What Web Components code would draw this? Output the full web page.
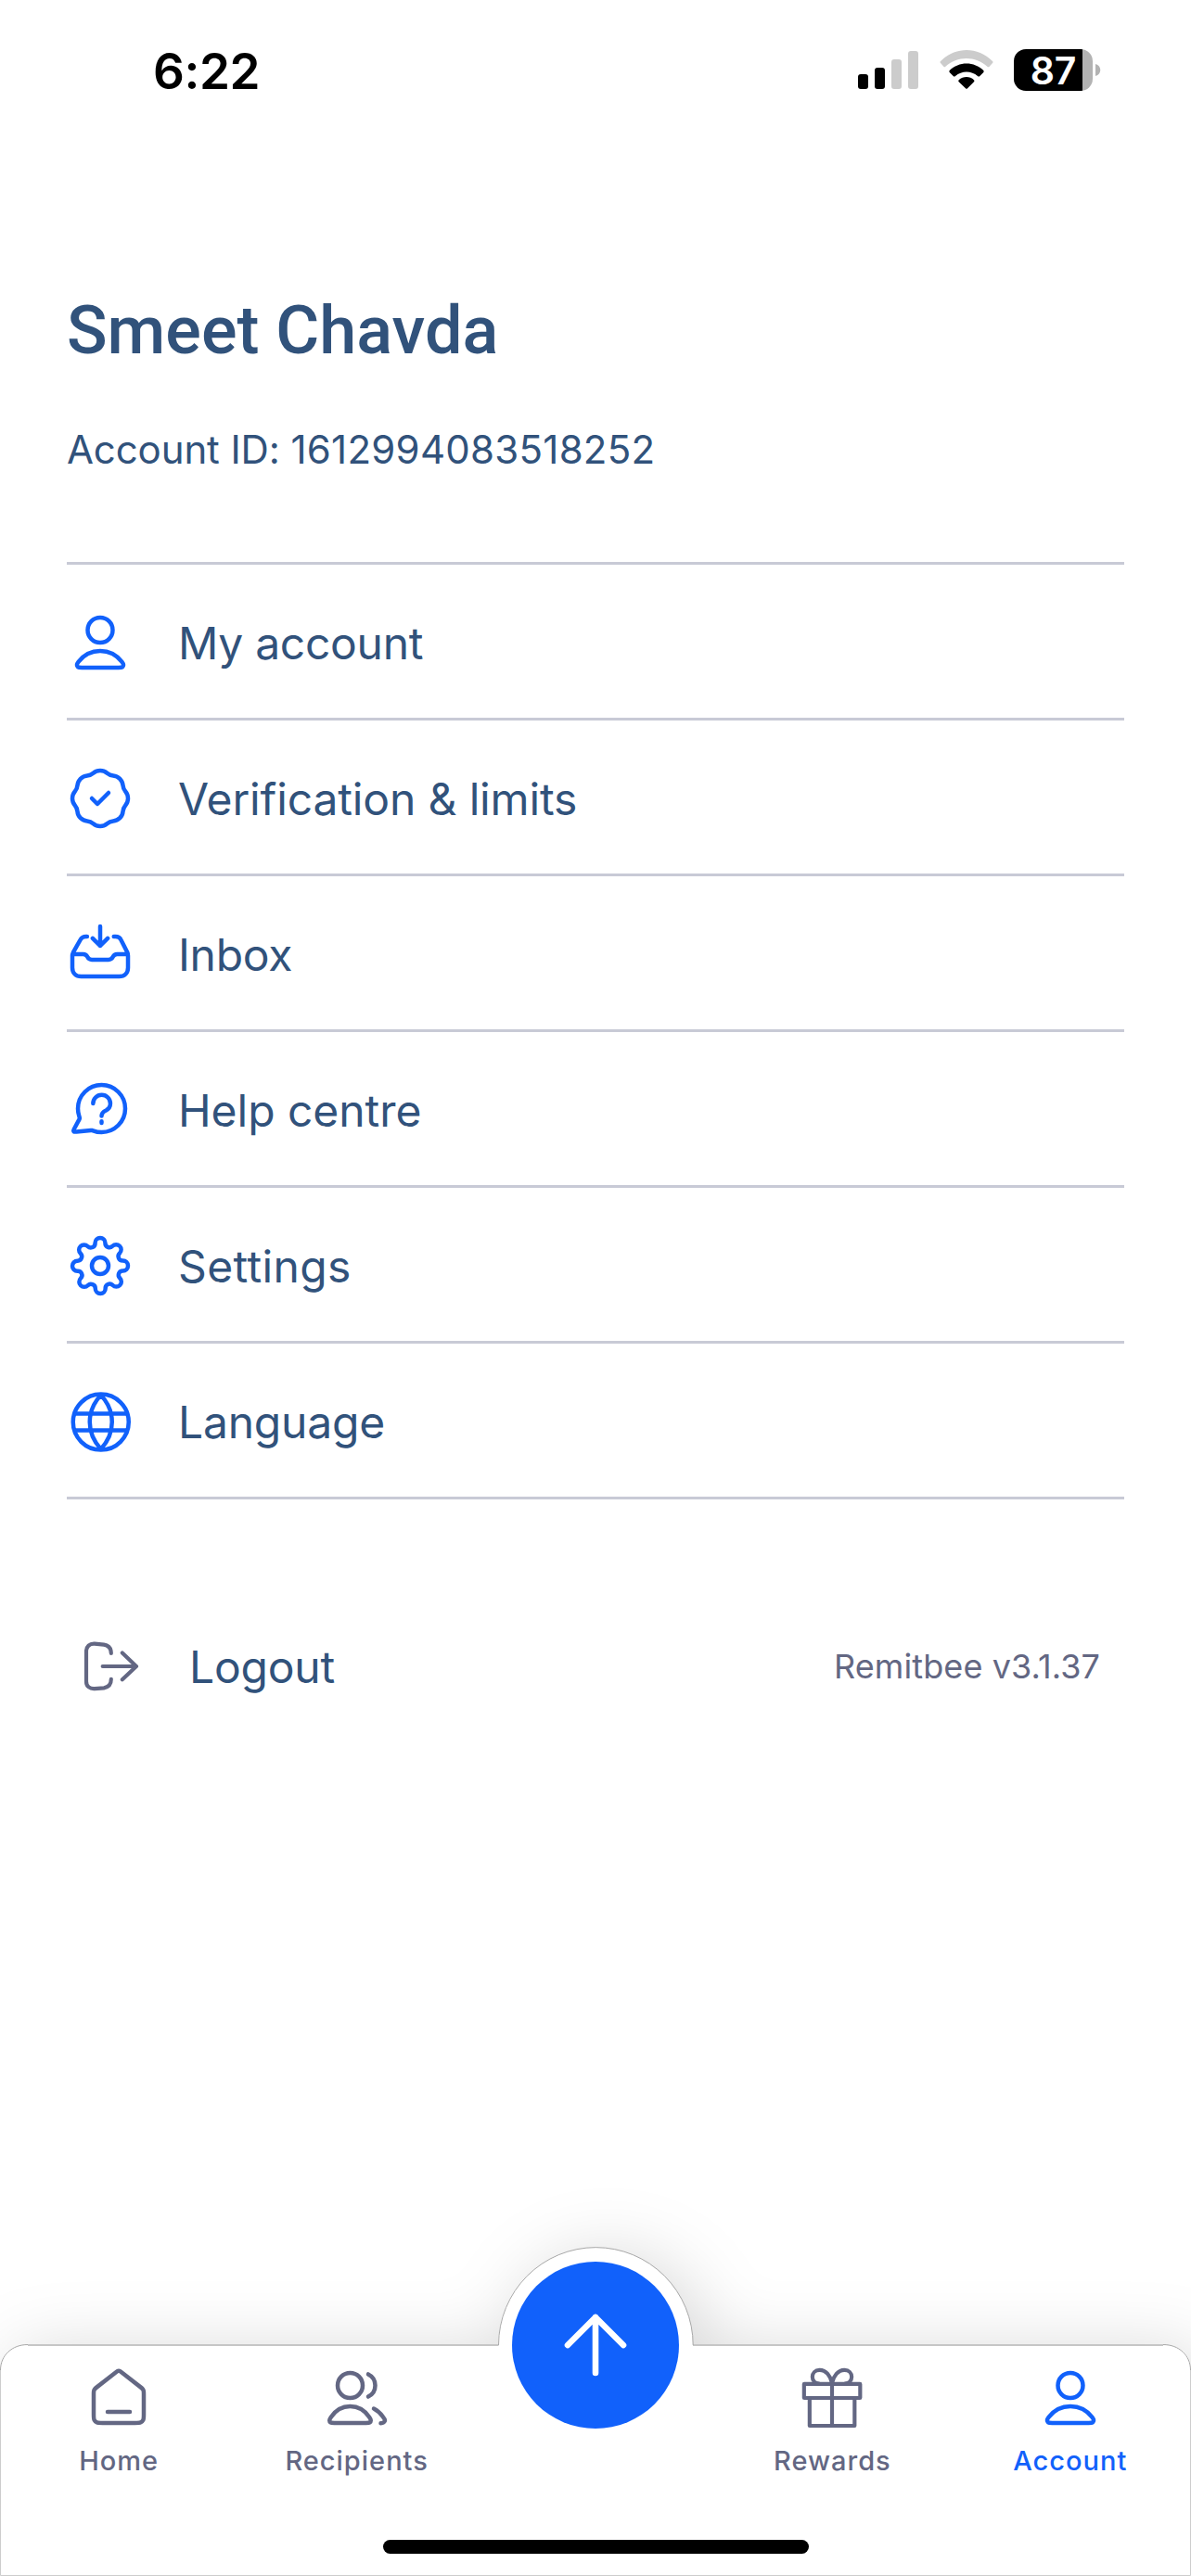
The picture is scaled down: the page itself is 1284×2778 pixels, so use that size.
<!DOCTYPE html>
<html lang="en">
<head>
<meta charset="utf-8">
<title>Account</title>
<style>
html,body{margin:0;background:#fff}
body{font-family:Inter,sans-serif;width:1284px;height:2778px;overflow:hidden}
</style>
</head>
<body>
<account-screen></account-screen>
<script>
const ICONS={
user:`<path d="M12 15C8.83 15 6.01 16.53 4.216 18.906C3.83 19.417 3.637 19.673 3.643 20.018C3.648 20.285 3.815 20.622 4.025 20.787C4.297 21 4.674 21 5.427 21H18.573C19.326 21 19.703 21 19.975 20.787C20.185 20.622 20.352 20.285 20.357 20.018C20.363 19.673 20.17 19.417 19.784 18.906C17.989 16.53 15.17 15 12 15Z"/><circle cx="12" cy="7.5" r="4.5"/>`,
verified:`<path d="M9 12L11 14L15 10M7.334 3.819C8.138 3.755 8.9 3.438 9.514 2.915C10.947 1.695 13.053 1.695 14.486 2.915C15.1 3.438 15.862 3.755 16.666 3.819C18.542 3.968 20.032 5.458 20.181 7.334C20.246 8.138 20.562 8.9 21.085 9.514C22.305 10.947 22.305 13.053 21.085 14.486C20.562 15.1 20.246 15.862 20.181 16.666C20.032 18.542 18.542 20.032 16.666 20.181C15.862 20.246 15.1 20.562 14.486 21.085C13.053 22.305 10.947 22.305 9.514 21.085C8.9 20.562 8.138 20.246 7.334 20.181C5.458 20.032 3.968 18.542 3.819 16.666C3.755 15.862 3.438 15.1 2.915 14.486C1.695 13.053 1.695 10.947 2.915 9.514C3.438 8.9 3.755 8.138 3.819 7.334C3.968 5.458 5.458 3.968 7.334 3.819Z"/>`,
inbox:`<path d="M12 2V9M9.3 6.3L12 9L14.7 6.3M7.3 5.67H6.9C5.9 5.67 5.3 6 4.85 6.85L2.3 11.4C2.1 11.8 2 12.1 2 12.6V16.8C2 18.8 3.2 20 5.2 20H18.8C20.8 20 22 18.8 22 16.8V12.6C22 12.1 21.95 11.8 21.75 11.3L19.5 6.9C19.1 6 18.5 5.67 17.5 5.67H16.9M2.2 12H5.9C6.57 12 7.1 12.35 7.4 12.95C7.75 13.65 8.3 14 9 14H15C15.7 14 16.25 13.65 16.6 12.95C16.9 12.35 17.43 12 18.1 12H21.8"/>`,
help:`<path d="M21 11.5C21 16.194 17.194 20 12.5 20C11.423 20 10.393 19.8 9.445 19.435C9.272 19.368 9.185 19.334 9.117 19.319C9.049 19.303 9 19.296 8.93 19.294C8.86 19.291 8.782 19.299 8.627 19.315L3.505 19.845C3.017 19.895 2.773 19.92 2.629 19.832C2.503 19.756 2.418 19.628 2.395 19.483C2.369 19.316 2.486 19.1 2.72 18.667L4.356 15.64C4.49 15.39 4.558 15.266 4.588 15.146C4.618 15.028 4.625 14.942 4.616 14.821C4.606 14.697 4.552 14.537 4.444 14.216C4.156 13.362 4 12.45 4 11.5C4 6.806 7.806 3 12.5 3C17.194 3 21 6.806 21 11.5Z"/><path d="M9.45 9.7C9.45 7.95 10.8 6.6 12.55 6.6S15.65 7.95 15.65 9.7C15.65 10.9 15 11.7 14.1 12.15C13.1 12.6 12.5 13.05 12.5 14.2M12.5 16.05V16.65"/>`,
settings:`<g transform="translate(12 12) scale(.909) translate(-12 -12)" stroke-width="1.65"><circle cx="12" cy="12" r="3.3"/><path d="M19.4 15a1.65 1.65 0 0 0 .33 1.82l.06.06a2 2 0 0 1 0 2.83 2 2 0 0 1-2.83 0l-.06-.06a1.65 1.65 0 0 0-1.82-.33 1.65 1.65 0 0 0-1 1.51V21a2 2 0 0 1-2 2 2 2 0 0 1-2-2v-.09A1.65 1.65 0 0 0 9 19.4a1.65 1.65 0 0 0-1.82.33l-.06.06a2 2 0 0 1-2.83 0 2 2 0 0 1 0-2.83l.06-.06a1.65 1.65 0 0 0 .33-1.82 1.65 1.65 0 0 0-1.51-1H3a2 2 0 0 1-2-2 2 2 0 0 1 2-2h.09A1.65 1.65 0 0 0 4.6 9a1.65 1.65 0 0 0-.33-1.82l-.06-.06a2 2 0 0 1 0-2.83 2 2 0 0 1 2.83 0l.06.06a1.65 1.65 0 0 0 1.82.33H9a1.65 1.65 0 0 0 1-1.51V3a2 2 0 0 1 2-2 2 2 0 0 1 2 2v.09a1.65 1.65 0 0 0 1 1.51 1.65 1.65 0 0 0 1.82-.33l.06-.06a2 2 0 0 1 2.83 0 2 2 0 0 1 0 2.83l-.06.06a1.65 1.65 0 0 0-.33 1.82V9a1.65 1.65 0 0 0 1.51 1H21a2 2 0 0 1 2 2 2 2 0 0 1-2 2h-.09a1.65 1.65 0 0 0-1.51 1z"/></g>`,
globe:`<g transform="translate(.25 .2)"><circle cx="12" cy="12" r="10"/><path d="M2.8 9H21.2M2.8 15H21.2M12 2.3C9.5 5 8 8.2 8 12S9.5 19 12 21.7C14.5 19 16 15.8 16 12S14.5 5 12 2.3Z"/></g>`,
logout:`<g transform="translate(-11.333 -13.5) scale(.11111)" stroke-width="12.5"><path d="M209.5 187.5C209.5 172 201 162 186 159.5L156 156.5C140 155.5 129 165 129 181V278C129 294 140 303 156 302L186 299.5C201 297 209.5 287 209.5 271M182 229.5H291M245.5 186L291 229.5L245.5 272.5"/></g>`,
home:`<path d="M8 17H16M11.018 2.764L4.235 8.039C3.782 8.392 3.555 8.568 3.392 8.789C3.247 8.984 3.14 9.205 3.074 9.439C3 9.704 3 9.991 3 10.565V17.8C3 18.92 3 19.48 3.218 19.908C3.41 20.284 3.716 20.59 4.092 20.782C4.52 21 5.08 21 6.2 21H17.8C18.92 21 19.48 21 19.908 20.782C20.284 20.59 20.59 20.284 20.782 19.908C21 19.48 21 18.92 21 17.8V10.565C21 9.991 21 9.704 20.926 9.439C20.86 9.205 20.753 8.984 20.608 8.789C20.445 8.568 20.218 8.392 19.765 8.039L12.982 2.764C12.631 2.491 12.455 2.354 12.261 2.302C12.09 2.255 11.91 2.255 11.739 2.302C11.545 2.354 11.369 2.491 11.018 2.764Z"/>`,
users:`<circle cx="9.5" cy="7.5" r="4.5"/><path d="M16 3.468C17.482 4.204 18.5 5.733 18.5 7.5C18.5 9.267 17.482 10.796 16 11.532M2.6 18.9C4.2 16.5 6.7 15 9.5 15S14.8 16.5 16.4 18.9C16.78 19.45 16.94 19.7 16.93 20.03C16.92 20.33 16.78 20.62 16.55 20.79C16.28 21 15.95 21 15.2 21H3.8C3.05 21 2.72 21 2.45 20.79C2.22 20.62 2.08 20.33 2.07 20.03C2.06 19.7 2.22 19.45 2.6 18.9ZM18 15.85C19.3 16.5 20.4 17.5 21.35 18.85C21.8 19.4 22 19.65 22 20C22 20.6 21.4 21.05 20.5 21.05"/>`,
gift:`<g transform="translate(-20.444 -16.667) scale(.11111)" stroke-width="12.5"><rect x="201.5" y="212.5" width="181.5" height="45.5" rx="1"/><path d="M219.5 258V348H365V258M292 212.5V348M292 210C287 186 272 167.5 252 167.5C237 167.5 228.5 178 228.5 190C228.5 202 237 211 250 212M292 210C297 186 312 167.5 332 167.5C347 167.5 355.5 178 355.5 190C355.5 202 347 211 334 212"/></g>`,
up:`<path d="M12 22V2M2 12L12 2L22 12"/>`
};
class UiIcon extends HTMLElement{
  connectedCallback(){
    this.attachShadow({mode:'open'}).innerHTML=`<style>:host{display:block;flex:none;width:72px;height:72px}svg{display:block;width:100%;height:100%;overflow:visible}</style>
    <svg viewBox="0 0 24 24" fill="none" stroke="currentColor" stroke-width="${this.getAttribute('weight')||1.5}" stroke-linecap="round" stroke-linejoin="round">${ICONS[this.getAttribute('name')]}</svg>`;
  }
}
class StatusBar extends HTMLElement{
  connectedCallback(){
    this.attachShadow({mode:'open'}).innerHTML=`<style>
    :host{display:flex;justify-content:space-between;align-items:flex-start;height:144px;box-sizing:border-box;padding:53px 97px 0 165px;color:#000}
    .time{font-weight:600;font-size:53px;line-height:48px;letter-spacing:-.4px}
    .right{display:flex;align-items:flex-start}
    svg{display:block}
    .wifi{margin:0 22px}
    .bat{width:85px;height:45px;border-radius:13px;background:linear-gradient(90deg,#000 74px,#b3b3b3 74px);color:#fff;font-weight:600;font-size:41px;line-height:46px;text-align:center;box-sizing:border-box;letter-spacing:-.3px}
    </style>
    <div class="time">6:22</div>
    <div class="right">
      <svg width="66" height="45" viewBox="925 53 66 45"><g fill="#000"><rect x="925" y="80" width="11" height="16" rx="3"/><rect x="943" y="73" width="11" height="23" rx="3"/></g><g fill="#ccc"><rect x="961" y="64" width="11" height="32" rx="3"/><rect x="979" y="55" width="11" height="41" rx="3"/></g></svg>
      <svg class="wifi" width="58" height="45" viewBox="338 69 174 135"><path d="M341 108C388 60 462 60 509 108Q512 111 509 114L499 125Q496 128 492 125C455 90 394 90 357 125Q354 128 351 125L341 114Q338 111 341 108Z" fill="#ccc"/><path d="M370 138C400 108 450 108 480 138Q482 141 480 144L468 156Q465 159 461 156C441 138 409 138 389 156Q385 159 382 156L370 144Q368 141 370 138ZM400 169C414 156 436 156 449 169Q452 172 449 175L428 196Q425 199 422 196L400 175Q397 172 400 169Z"/></svg>
      <div class="bat">87</div>
      <svg width="9" height="45" viewBox="0 0 9 45"><path d="M3 16C10 18 10 27 3 29Z" fill="#b3b3b3"/></svg>
    </div>`;
  }
}
class MenuRow extends HTMLElement{
  connectedCallback(){
    this.attachShadow({mode:'open'}).innerHTML=`<style>
    :host{display:flex;align-items:center;gap:48px;height:168px;box-sizing:border-box;padding-top:3px;border-bottom:3px solid #c8cad6;font-size:48px;line-height:72px;letter-spacing:${this.getAttribute('track')||0}px;color:#31527b}
    ui-icon{color:#1161fb}
    span{padding-top:2px}</style><ui-icon name="${this.getAttribute('icon')}"></ui-icon><span><slot></slot></span>`;
  }
}
class NavItem extends HTMLElement{
  connectedCallback(){
    this.attachShadow({mode:'open'}).innerHTML=`<style>
    :host{display:flex;flex-direction:column;align-items:center;flex:1;padding-top:22px;color:#636783;font-weight:500;font-size:29px;line-height:36px;letter-spacing:1px}
    :host([active]){color:#1161fb}
    span{margin-top:14px;white-space:nowrap}</style><ui-icon name="${this.getAttribute('icon')}"></ui-icon><span><slot></slot></span>`;
  }
}
class TabBar extends HTMLElement{
  connectedCallback(){
    this.attachShadow({mode:'open'}).innerHTML=`<style>
    :host{display:block;position:relative;height:250px}
    .bg{position:absolute;left:0;top:-250px;width:1284px;height:500px;overflow:visible}
    nav{position:relative;display:flex;align-items:flex-start;height:211px;padding-right:2px}
    .send{flex:1;display:flex;justify-content:center}
    .btn{width:180px;height:180px;border-radius:50%;background:#1161fb;color:#fff;display:flex;align-items:center;justify-content:center;margin-top:-89px;position:relative;left:1px;flex:none}
    .bar{position:relative;width:459px;height:15px;border-radius:8px;background:#000;margin:0 auto}
    </style>
    <svg class="bg" viewBox="0 2278 1284 500"><defs><filter id="s" x="-20%" y="-60%" width="140%" height="220%"><feGaussianBlur stdDeviation="38"/></filter></defs>
    <path filter="url(#s)" transform="translate(14 8)" fill="#000" fill-opacity=".16" d="M0 2778V2558Q0 2529 30 2529H537A105 105 0 0 1 747 2529H1254Q1284 2529 1284 2558V2778Z"/>
    <path fill="#fff" d="M0 2778V2558Q0 2529 30 2529H537A105 105 0 0 1 747 2529H1254Q1284 2529 1284 2558V2778Z"/>
    <path fill="none" stroke="#c6c6c6" stroke-width="2" d="M30 2529H537.5M747 2529H1254"/>
    <path fill="none" stroke="#a9a9a9" stroke-width="1" d="M.5 2556C.5 2540 13 2528.5 30 2528.5M537.5 2529A104.8 105.3 0 0 1 747.2 2529M1254 2528.5C1271 2528.5 1283.5 2540 1283.5 2556"/>
    <path fill="none" stroke="#cdcdcd" d="M.5 2556V2777.5H1283.5V2556"/></svg>
    <nav><nav-item icon="home">Home</nav-item><nav-item icon="users">Recipients</nav-item><div class="send"><div class="btn"><ui-icon name="up" weight="2.2"></ui-icon></div></div><nav-item icon="gift">Rewards</nav-item><nav-item icon="user" active>Account</nav-item></nav>
    <div class="bar"></div>`;
  }
}
class AccountScreen extends HTMLElement{
  connectedCallback(){
    this.attachShadow({mode:'open'}).innerHTML=`<style>
    :host{display:flex;flex-direction:column;width:1284px;height:2778px;background:#fff;overflow:hidden;color:#31527b}
    main{padding:0 72px;flex:1}
    h1{margin:171px 0 0;font:500 72px/84px Roboto,sans-serif}
    .id{margin-top:56px;font-size:42px;line-height:60px;height:60px;letter-spacing:-.12px}
    .num{letter-spacing:.26px}
    .menu{margin-top:91px;border-top:3px solid #c8cad6}
    .out{display:flex;align-items:center;height:72px;margin-top:144px;padding:0 26px 0 12px}
    .out ui-icon{color:#636783}
    .lo{font-size:48px;margin-left:48px;flex:1;letter-spacing:-.2px}
    .ver{font-size:36px;color:#636783;letter-spacing:.1px}
    </style>
    <status-bar></status-bar>
    <main><h1>Smeet Chavda</h1><div class="id">Account ID: <span class="num">1612994083518252</span></div>
    <div class="menu"><menu-row icon="user" track="-.3">My account</menu-row><menu-row icon="verified" track="-.14">Verification &amp; limits</menu-row><menu-row icon="inbox" track="-.3">Inbox</menu-row><menu-row icon="help" track="-.05">Help centre</menu-row><menu-row icon="settings" track=".38">Settings</menu-row><menu-row icon="globe" track="-.2">Language</menu-row></div>
    <div class="out"><ui-icon name="logout"></ui-icon><span class="lo">Logout</span><span class="ver">Remitbee v3.1.37</span></div></main>
    <tab-bar></tab-bar>`;
  }
}
customElements.define('ui-icon',UiIcon);
customElements.define('status-bar',StatusBar);
customElements.define('menu-row',MenuRow);
customElements.define('nav-item',NavItem);
customElements.define('tab-bar',TabBar);
customElements.define('account-screen',AccountScreen);
</script>
</body>
</html>
